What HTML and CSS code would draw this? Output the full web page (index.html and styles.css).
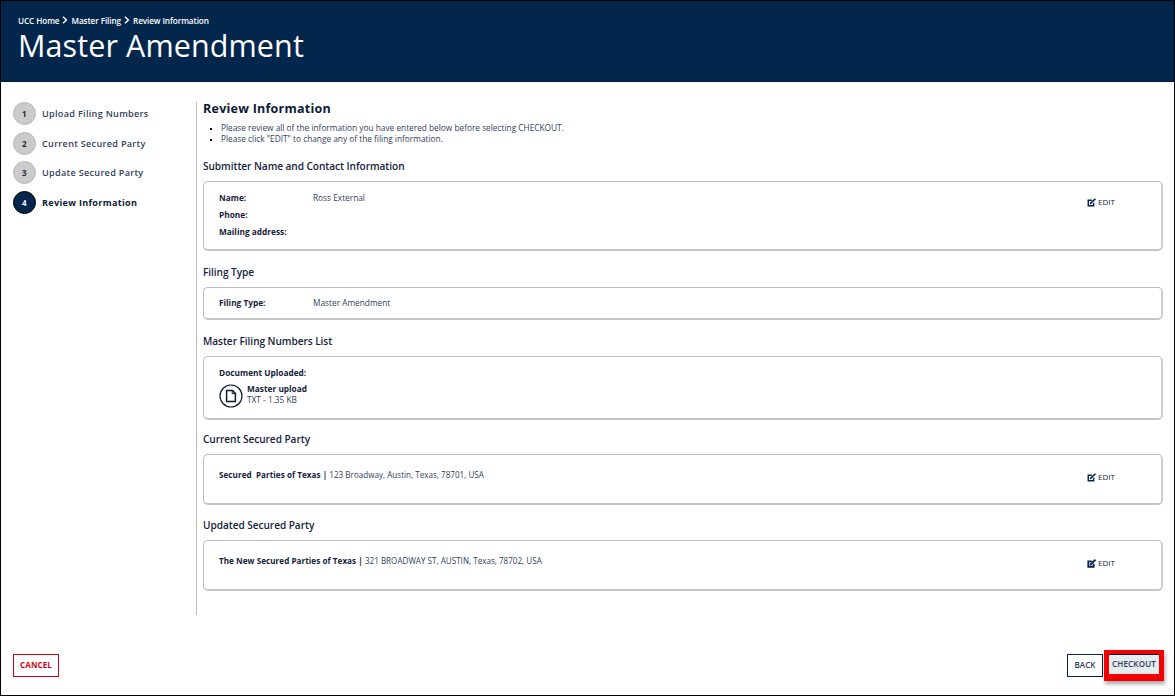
FILE: index.html
```html
<!DOCTYPE html>
<html lang="en">
<head>
<meta charset="utf-8">
<title>Master Amendment</title>
<link rel="stylesheet" href="styles.css">
</head>
<body>
<div class="frame">
  <header class="hero">
    <nav class="crumbs">
      <span>UCC Home</span>
      <svg class="chev" viewBox="0 0 6 8"><path d="M1 .8 4.4 4 1 7.2" fill="none" stroke="#fff" stroke-width="1.4"/></svg>
      <span>Master Filing</span>
      <svg class="chev" viewBox="0 0 6 8"><path d="M1 .8 4.4 4 1 7.2" fill="none" stroke="#fff" stroke-width="1.4"/></svg>
      <span>Review Information</span>
    </nav>
    <h1 class="title">Master Amendment</h1>
  </header>
  <div class="body">
    <aside class="steps">
      <div class="step"><span class="dot">1</span><span class="step-label">Upload Filing Numbers</span></div>
      <div class="step"><span class="dot">2</span><span class="step-label">Current Secured Party</span></div>
      <div class="step"><span class="dot">3</span><span class="step-label">Update Secured Party</span></div>
      <div class="step current"><span class="dot">4</span><span class="step-label">Review Information</span></div>
    </aside>
    <main class="content">
      <h2 class="page-head">Review Information</h2>
      <ul class="notes">
        <li>Please review all of the information you have entered below before selecting CHECKOUT.</li>
        <li>Please click "EDIT" to change any of the filing information.</li>
      </ul>

      <h3 class="sec sec-first">Submitter Name and Contact Information</h3>
      <section class="card card-contact">
        <div class="rows">
          <div class="row"><b class="key">Name:</b><span>Ross External</span></div>
          <div class="row"><b class="key">Phone:</b></div>
          <div class="row"><b class="key">Mailing address:</b></div>
        </div>
        <a class="edit"><svg class="pen" viewBox="0 0 10 10"><path d="M5.4 2.6H1.4v6h6V5.2" fill="none" stroke="#02234a" stroke-width="1.6"/><path d="M3.4 6.6 9.4 .8" stroke="#02234a" stroke-width="1.8"/></svg>EDIT</a>
      </section>

      <h3 class="sec">Filing Type</h3>
      <section class="card card-type">
        <div class="row"><b class="key">Filing Type:</b><span>Master Amendment</span></div>
      </section>

      <h3 class="sec">Master Filing Numbers List</h3>
      <section class="card card-doc">
        <b class="doc-label">Document Uploaded:</b>
        <div class="doc">
          <svg class="doc-icon" viewBox="0 0 24 24"><circle cx="12" cy="12" r="11" fill="none" stroke="#0a1a33" stroke-width="1.2"/><path d="M7.6 6.4h5.8l3 3v8.2H7.6z" fill="none" stroke="#0a1a33" stroke-width="1.5"/><path d="M13.2 6.4v3.2h3.2" fill="none" stroke="#0a1a33" stroke-width="1"/></svg>
          <div class="doc-text"><b>Master upload</b><span>TXT - 1.35 KB</span></div>
        </div>
      </section>

      <h3 class="sec">Current Secured Party</h3>
      <section class="card card-party">
        <p class="party"><b>Secured&nbsp; Parties of Texas |</b> 123 Broadway, Austin, Texas, 78701, USA</p>
        <a class="edit"><svg class="pen" viewBox="0 0 10 10"><path d="M5.4 2.6H1.4v6h6V5.2" fill="none" stroke="#02234a" stroke-width="1.6"/><path d="M3.4 6.6 9.4 .8" stroke="#02234a" stroke-width="1.8"/></svg>EDIT</a>
      </section>

      <h3 class="sec">Updated Secured Party</h3>
      <section class="card card-party">
        <p class="party"><b>The New Secured Parties of Texas |</b> 321 BROADWAY ST, AUSTIN, Texas, 78702, USA</p>
        <a class="edit"><svg class="pen" viewBox="0 0 10 10"><path d="M5.4 2.6H1.4v6h6V5.2" fill="none" stroke="#02234a" stroke-width="2"/><path d="M3.4 6.6 9.4 .8" stroke="#02234a" stroke-width="2.2"/></svg>EDIT</a>
      </section>
    </main>
  </div>
  <footer class="actions">
    <button class="btn cancel">CANCEL</button>
    <div class="right">
      <button class="btn back">BACK</button>
      <div class="mark"><button class="btn checkout">CHECKOUT</button></div>
    </div>
  </footer>
</div>
</body>
</html>
```

FILE: styles.css
```css
* { box-sizing: border-box; }
html, body { margin: 0; height: 100%; }
body {
  font-family: "Open Sans", "Noto Sans", sans-serif;
  color: #1a2438;
  background: #fff;
}
.frame {
  width: 1175px;
  height: 696px;
  border: 1px solid #000;
  display: flex;
  flex-direction: column;
  overflow: hidden;
}
.hero {
  height: 81px;
  flex: none;
  background: #03264d;
  color: #fff;
  padding: 12px 0 0 17px;
  border-bottom: 1px solid #021a36;
}
.crumbs {
  display: flex;
  align-items: center;
  gap: 3px;
  height: 14px;
  font-size: 8.2px;
  font-weight: 600;
  letter-spacing: -.1px;
}
.chev { width: 6px; height: 8px; }
.title {
  margin: 0;
  font-size: 30.5px;
  line-height: 36px;
  font-weight: 400;
  letter-spacing: .1px;
}
.body { display: flex; flex: none; height: 533px; }
.steps {
  width: 195px;
  flex: none;
  padding: 20px 0 0 12px;
  display: flex;
  flex-direction: column;
  gap: 6px;
}
.step {
  display: flex;
  align-items: center;
  gap: 6px;
  height: 23.6px;
  font-size: 9.1px;
  font-weight: 600;
  color: #33415a;
  letter-spacing: .3px;
}
.dot {
  width: 23px;
  height: 23px;
  border-radius: 50%;
  background: #cbcbcb;
  border: 1px solid #b8b8b8;
  display: flex;
  align-items: center;
  justify-content: center;
  font-size: 8px;
  font-weight: 700;
  color: #1e2a40;
}
.current { font-weight: 700; color: #0b1a33; }
.current .dot { background: #03264d; border-color: #000; color: #fff; }
.content {
  width: 978px;
  flex: none;
  margin-top: 20px;
  height: 513px;
  border-left: 1px solid #bdbdbd;
  padding-left: 6px;
}
.page-head {
  margin: 0;
  font-size: 12.5px;
  line-height: 14px;
  font-weight: 700;
  color: #0b1a33;
  letter-spacing: .25px;
}
.notes {
  list-style: square;
  margin: 6px 0 0;
  padding: 0 0 0 18px;
  font-size: 8.3px;
  line-height: 11px;
  color: #33415a;
}
.notes li::marker { font-size: 6px; color: #111; }
.sec {
  margin: 0;
  font-size: 10.1px;
  font-weight: 600;
  line-height: 14px;
  color: #16233b;
  padding-top: 13px;
  padding-bottom: 8px;
  letter-spacing: -.05px;
}
.sec-first { padding-top: 15px; }
.card {
  width: 960px;
  border: 1px solid #bdbdbd;
  border-bottom: 2px solid #c4c4c4;
  border-right: 2px solid #cdcdcd;
  border-radius: 5px;
  padding: 0 15px;
  display: flex;
  justify-content: space-between;
  font-size: 8.3px;
  color: #33415a;
}
.card-contact { height: 70px; padding-top: 10px; margin-bottom: 1px; }
.card-type { height: 33px; padding-top: 9px; margin-bottom: 1px; }
.card-doc { height: 64px; padding-top: 10px; margin-bottom: -1px; flex-direction: column; justify-content: flex-start; }
.card-party { height: 51px; padding-top: 14px; }
.rows { display: flex; flex-direction: column; gap: 6px; }
.row { display: flex; line-height: 11px; }
.key { width: 94px; font-weight: 700; color: #16233b; }
.edit {
  display: flex;
  align-items: flex-start;
  gap: 2px;
  line-height: 11px;
  margin-top: 4px;
  padding-right: 31px;
  font-size: 8px;
  color: #16233b;
}
.card-party .edit { margin-top: 2px; }
.pen { width: 9px; height: 9px; margin-top: 2px; }
.doc-label { font-weight: 700; color: #16233b; line-height: 11px; }
.doc { display: flex; gap: 4px; margin-top: 6px; }
.doc-icon { width: 24px; height: 24px; }
.doc-text { display: flex; flex-direction: column; line-height: 10.5px; }
.doc-text b { color: #16233b; }
.party { margin: 0; line-height: 11px; font-size: 8.1px; }
.party b { color: #16233b; font-weight: 700; letter-spacing: .05px; }
.actions {
  flex: 1;
  display: flex;
  align-items: flex-start;
  justify-content: space-between;
  padding: 39px 10px 0 12px;
}
.btn {
  font-family: inherit;
  font-size: 8px;
  font-weight: 600;
  background: #fff;
  padding: 0 0 2px;
  border-radius: 0;
  letter-spacing: .1px;
}
.cancel {
  width: 46px;
  height: 23px;
  border: 1px solid #d0021b;
  color: #d0021b;
  font-weight: 700;
}
.right { display: flex; align-items: flex-start; gap: 1px; }
.back {
  width: 36px;
  height: 23px;
  border: 1px solid #0b1f40;
  color: #2b3a55;
}
.mark {
  border-style: solid;
  border-color: #f00000;
  border-width: 4px 5px 7px;
  box-shadow: 1px 3px 4px rgba(0,0,0,.35);
  height: 31px;
  width: 60px;
  margin-top: -4px;
}
.checkout {
  display: block;
  width: 100%;
  height: 100%;
  background: #e6ebee;
  border: 0;
  border-top: 1px solid #0b1f40;
  color: #2b3a55;
  letter-spacing: .2px;
  white-space: nowrap;
}
```
